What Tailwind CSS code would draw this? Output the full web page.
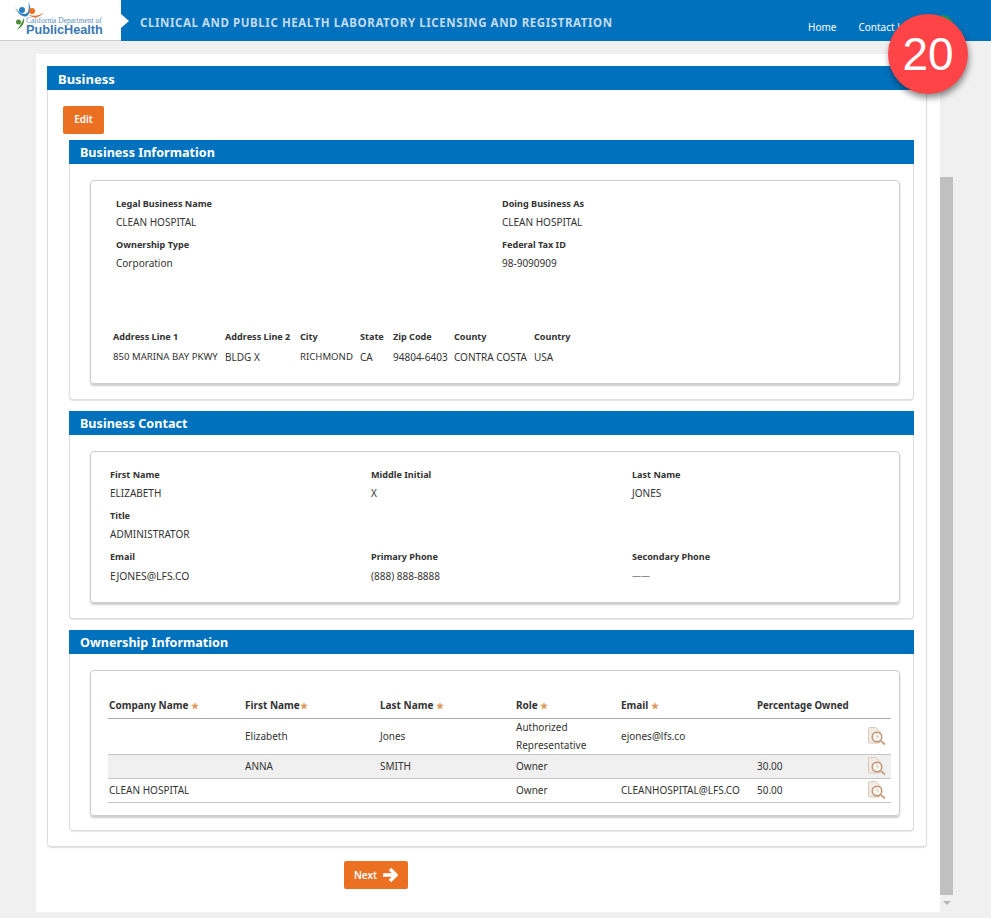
<!DOCTYPE html>
<html lang="en">
<head>
    <meta charset="UTF-8">
    <title>Business</title>
    <script src="https://cdn.jsdelivr.net/npm/@tailwindcss/browser@4"></script>
</head>
<body class="bg-[#f0f0f0] font-['Noto_Sans',sans-serif] text-[10px] text-[#333] h-[918px] overflow-hidden relative">

    <!-- header -->
    <header class="h-[41px] bg-[#0071bc] flex items-center relative">
        <div class="w-[121px] h-[41px] bg-white border-b border-[#ccc] relative shrink-0">
            <svg class="absolute left-[14px] top-[1px]" width="34" height="30" viewBox="0 0 34 30">
                <circle cx="8" cy="9" r="3" fill="#2a7fc1"/>
                <path d="M1 6 C5 13 11 15 14 11 C15 8 15 5 14.500 1 C17 6 17 12 13 15 C9 17 4 13 1 6Z" fill="#2a7fc1"/>
                <circle cx="18" cy="10" r="3" fill="#ee7023"/>
                <path d="M15 14 C21 16 27 14 30 11 C26 17 19 18 15 14Z" fill="#ee7023"/>
                <circle cx="4.500" cy="21" r="2.500" fill="#4a8c3a"/>
                <path d="M10 17 C11 22 8 26 3 29 C6 25 8 21 10 17Z" fill="#4a8c3a"/>
            </svg>
            <div class="absolute left-[26px] top-[16px] font-['Liberation_Serif',serif] text-[7.500px] leading-[9px] text-[#5b8fc0] whitespace-nowrap">California Department of</div>
            <div class="absolute left-[26px] top-[25px] font-['Liberation_Sans',sans-serif] font-bold text-[12.700px] leading-[11px] text-[#3a78b5] whitespace-nowrap">PublicHealth</div>
            <div class="absolute left-[121px] top-[14px] w-0 h-0 border-y-[7px] border-y-transparent border-l-[8px] border-l-white"></div>
        </div>
        <div class="ml-[19px] mt-[5px] text-[11.500px] font-bold tracking-[0.58px] text-[#c3dcef] whitespace-nowrap">CLINICAL AND PUBLIC HEALTH LABORATORY LICENSING AND REGISTRATION</div>
        <nav class="absolute left-[808px] top-[20px] flex gap-[22px] text-[10px] leading-[14px] text-white">
            <span>Home</span>
            <span>Contact Us</span>
        </nav>
        <div class="absolute left-[933px] top-[15px] w-[20px] h-[14px] rounded-t-full bg-[#1a9a5a]"></div>
    </header>

    <!-- scrollbar -->
    <div class="absolute left-[940px] top-[177px] w-[13px] h-[718px] bg-[#c0c0c0]"></div>
    <div class="absolute left-[943px] top-[901px] w-0 h-0 border-x-[4px] border-x-transparent border-t-[4px] border-t-[#b5b5b5]"></div>

    <!-- badge -->
    <div class="absolute left-[888px] top-[14px] w-[80px] h-[80px] rounded-full bg-[#ff4447] shadow-[1px_4px_6px_rgba(0,0,0,0.45)] flex items-center justify-center font-['Liberation_Sans',sans-serif] text-[46px] text-white z-10">20</div>

    <main class="ml-[36px] mt-[13px] w-[904px] h-[858px] bg-white pt-[12px] pl-[11px]">
        <section class="w-[880px] h-[781px] border border-t-0 border-[#ddd] rounded-b-[4px] shadow-[0_1px_1px_rgba(0,0,0,0.12)]">
            <h2 class="-ml-px w-[881px] h-[24px] bg-[#0071bc] text-white font-bold text-[13px] leading-[27px] pl-[11px]">Business</h2>
            <button class="block ml-[15px] mt-[16px] w-[41px] h-[28px] pb-[2px] bg-[#ec7022] rounded-[2px] text-white text-[10px] font-semibold">Edit</button>

            <div class="ml-[21px] mt-[6px] w-[845px] flex flex-col gap-[11px]">
                <!-- Business Information -->
                <section class="h-[260px] border border-t-0 border-[#ddd] rounded-b-[4px] shadow-[0_1px_1px_rgba(0,0,0,0.1)]">
                    <h3 class="-mx-px h-[24px] bg-[#0071bc] text-white font-bold text-[12.600px] leading-[26px] pl-[11px]">Business Information</h3>
                    <div class="ml-[20px] mt-[16px] w-[810px] h-[204px] border border-[#ccc] rounded-[4px] shadow-[0_2px_2px_rgba(0,0,0,0.2)] pt-[15px]">
                        <div class="grid grid-cols-[386px_1fr] pl-[25px] leading-[14px]">
                            <div class="font-bold text-[9.100px] leading-[16px] h-[19px]">Legal Business Name</div>
                            <div class="font-bold text-[9.100px] leading-[16px] h-[19px]">Doing Business As</div>
                            <div class="h-[22px]">CLEAN HOSPITAL</div>
                            <div class="h-[22px]">CLEAN HOSPITAL</div>
                            <div class="font-bold text-[9.100px] leading-[16px] h-[19px]">Ownership Type</div>
                            <div class="font-bold text-[9.100px] leading-[16px] h-[19px]">Federal Tax ID</div>
                            <div class="h-[14px]">Corporation</div>
                            <div class="h-[14px]">98-9090909</div>
                        </div>
                        <div class="mt-[60px] ml-[22px] grid grid-cols-[112px_75px_60px_33px_61px_80px_60px] leading-[14px] whitespace-nowrap">
                            <div class="font-bold text-[9.100px] h-[20px]">Address Line 1</div>
                            <div class="font-bold text-[9.100px] h-[20px]">Address Line 2</div>
                            <div class="font-bold text-[9.100px] h-[20px]">City</div>
                            <div class="font-bold text-[9.100px] h-[20px]">State</div>
                            <div class="font-bold text-[9.100px] h-[20px]">Zip Code</div>
                            <div class="font-bold text-[9.100px] h-[20px]">County</div>
                            <div class="font-bold text-[9.100px] h-[20px]">Country</div>
                            <div class="text-[9.600px]">850 MARINA BAY PKWY</div>
                            <div>BLDG X</div>
                            <div class="text-[9.600px]">RICHMOND</div>
                            <div>CA</div>
                            <div>94804-6403</div>
                            <div>CONTRA COSTA</div>
                            <div>USA</div>
                        </div>
                    </div>
                </section>

                <!-- Business Contact -->
                <section class="h-[208px] border border-t-0 border-[#ddd] rounded-b-[4px] shadow-[0_1px_1px_rgba(0,0,0,0.1)]">
                    <h3 class="-mx-px h-[24px] bg-[#0071bc] text-white font-bold text-[12.600px] leading-[26px] pl-[11px]">Business Contact</h3>
                    <div class="ml-[20px] mt-[16px] w-[810px] h-[152px] border border-[#ccc] rounded-[4px] shadow-[0_2px_2px_rgba(0,0,0,0.2)] pt-[15px] pl-[19px]">
                        <div class="grid grid-cols-[261px_261px_1fr] leading-[14px]">
                            <div class="font-bold text-[9.100px] leading-[16px] h-[19px]">First Name</div>
                            <div class="font-bold text-[9.100px] leading-[16px] h-[19px]">Middle Initial</div>
                            <div class="font-bold text-[9.100px] leading-[16px] h-[19px]">Last Name</div>
                            <div class="h-[22px]">ELIZABETH</div>
                            <div class="h-[22px]">X</div>
                            <div class="h-[22px]">JONES</div>
                            <div class="font-bold text-[9.100px] leading-[16px] h-[19px]">Title</div>
                            <div></div>
                            <div></div>
                            <div class="h-[22px]">ADMINISTRATOR</div>
                            <div></div>
                            <div></div>
                            <div class="font-bold text-[9.100px] leading-[16px] h-[20px]">Email</div>
                            <div class="font-bold text-[9.100px] leading-[16px] h-[20px]">Primary Phone</div>
                            <div class="font-bold text-[9.100px] leading-[16px] h-[20px]">Secondary Phone</div>
                            <div class="text-[10.400px]">EJONES@LFS.CO</div>
                            <div>(888) 888-8888</div>
                            <div class="text-[9px]">——</div>
                        </div>
                    </div>
                </section>

                <!-- Ownership Information -->
                <section class="h-[201px] border border-t-0 border-[#ddd] rounded-b-[4px] shadow-[0_1px_1px_rgba(0,0,0,0.1)]">
                    <h3 class="-mx-px h-[24px] bg-[#0071bc] text-white font-bold text-[12.600px] leading-[26px] pl-[11px]">Ownership Information</h3>
                    <div class="ml-[20px] mt-[16px] w-[810px] h-[146px] border border-[#ccc] rounded-[4px] shadow-[0_2px_2px_rgba(0,0,0,0.2)] pt-[25px] pl-[17px]">
                        <table class="w-[783px] table-fixed border-collapse leading-[18px]">
                            <colgroup>
                                <col class="w-[136px]"><col class="w-[135px]"><col class="w-[136px]"><col class="w-[105px]"><col class="w-[136px]"><col class="w-[100px]"><col>
                            </colgroup>
                            <thead>
                                <tr class="h-[22px] border-b border-[#aaa] text-left align-top">
                                    <th class="pl-px font-bold">Company Name <span class="text-[9px] text-[#dc9a5c]">★</span></th>
                                    <th class="pl-px font-bold">First Name<span class="text-[9px] text-[#dc9a5c]">★</span></th>
                                    <th class="pl-px font-bold">Last Name <span class="text-[9px] text-[#dc9a5c]">★</span></th>
                                    <th class="pl-px font-bold">Role <span class="text-[9px] text-[#dc9a5c]">★</span></th>
                                    <th class="pl-px font-bold">Email <span class="text-[9px] text-[#dc9a5c]">★</span></th>
                                    <th class="pl-px pt-px font-bold text-[9.700px] whitespace-nowrap">Percentage Owned</th>
                                    <th></th>
                                </tr>
                            </thead>
                            <tbody>
                                <tr class="h-[36px] border-b border-[#c4c4c4]">
                                    <td class="pl-px"></td>
                                    <td class="pl-px">Elizabeth</td>
                                    <td class="pl-px">Jones</td>
                                    <td class="pl-px"><div class="h-[34px] -mt-[2px]">Authorized Representative</div></td>
                                    <td class="pl-px">ejones@lfs.co</td>
                                    <td class="pl-px"></td>
                                    <td>
                                        <svg class="ml-[10px]" width="21" height="20" viewBox="0 0 21 20"><path d="M2.500 2.500 Q2.500 1.500 3.500 1.500 H10 L14 5.500 V16 Q14 17 13 17 H3.500 Q2.500 17 2.500 16Z" fill="#f3ece3" stroke="#d9c9b8"/><circle cx="11" cy="11" r="4.800" fill="#faf6f1" stroke="#bd9272" stroke-width="1.400"/><path d="M11 8.500 V11 H13" fill="none" stroke="#cdb39c" stroke-width="0.700"/><path d="M15 15 L19 18.500" stroke="#c9a384" stroke-width="2"/></svg>
                                    </td>
                                </tr>
                                <tr class="h-[24px] border-b border-[#c4c4c4] bg-[#f0f0f0]">
                                    <td class="pl-px"></td>
                                    <td class="pl-px">ANNA</td>
                                    <td class="pl-px">SMITH</td>
                                    <td class="pl-px">Owner</td>
                                    <td class="pl-px"></td>
                                    <td class="pl-px">30.00</td>
                                    <td>
                                        <svg class="ml-[10px]" width="21" height="20" viewBox="0 0 21 20"><path d="M2.500 2.500 Q2.500 1.500 3.500 1.500 H10 L14 5.500 V16 Q14 17 13 17 H3.500 Q2.500 17 2.500 16Z" fill="#f3ece3" stroke="#d9c9b8"/><circle cx="11" cy="11" r="4.800" fill="#faf6f1" stroke="#bd9272" stroke-width="1.400"/><path d="M11 8.500 V11 H13" fill="none" stroke="#cdb39c" stroke-width="0.700"/><path d="M15 15 L19 18.500" stroke="#c9a384" stroke-width="2"/></svg>
                                    </td>
                                </tr>
                                <tr class="h-[24px] border-b border-[#c4c4c4]">
                                    <td class="pl-px">CLEAN HOSPITAL</td>
                                    <td class="pl-px"></td>
                                    <td class="pl-px"></td>
                                    <td class="pl-px">Owner</td>
                                    <td class="pl-px">CLEANHOSPITAL@LFS.CO</td>
                                    <td class="pl-px">50.00</td>
                                    <td>
                                        <svg class="ml-[10px]" width="21" height="20" viewBox="0 0 21 20"><path d="M2.500 2.500 Q2.500 1.500 3.500 1.500 H10 L14 5.500 V16 Q14 17 13 17 H3.500 Q2.500 17 2.500 16Z" fill="#f3ece3" stroke="#d9c9b8"/><circle cx="11" cy="11" r="4.800" fill="#faf6f1" stroke="#bd9272" stroke-width="1.400"/><path d="M11 8.500 V11 H13" fill="none" stroke="#cdb39c" stroke-width="0.700"/><path d="M15 15 L19 18.500" stroke="#c9a384" stroke-width="2"/></svg>
                                    </td>
                                </tr>
                            </tbody>
                        </table>
                    </div>
                </section>
            </div>
        </section>

        <button class="flex items-center justify-center gap-[5px] ml-[297px] mt-[14px] w-[64px] h-[28px] bg-[#ec7022] rounded-[2px] text-white text-[10px] font-semibold">
            Next
            <svg width="16" height="16" viewBox="0 0 16 16"><path d="M1 8 H13 M8 2 L14 8 L8 14" fill="none" stroke="#fff" stroke-width="3.400"/></svg>
        </button>
    </main>

</body>
</html>
